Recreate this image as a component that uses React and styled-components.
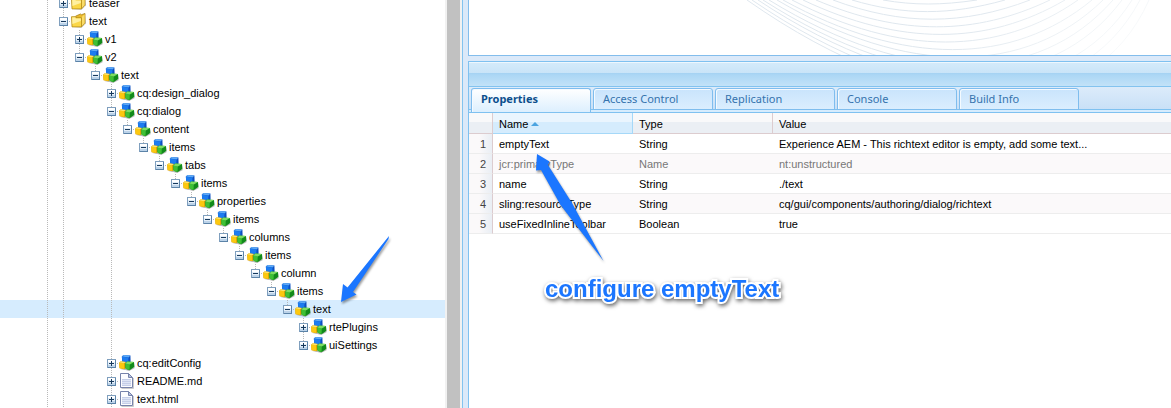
import React from 'react';
import styled, { createGlobalStyle, css } from 'styled-components';

const GlobalStyle = createGlobalStyle`
  *, *::before, *::after { box-sizing: border-box; }
  body {
    margin: 0;
    background: #fff;
    color: #000;
    font: 11px/18px "Liberation Sans", Arial, sans-serif;
  }
  button { font: inherit; color: inherit; margin: 0; padding: 0; border: 0; background: none; }
`;

const Page = styled.div`
  display: flex;
  min-height: 100vh;
`;

/* ---------- repository tree ---------- */

const Explorer = styled.nav`
  display: flex;
  flex: 0 0 463px;
  overflow: hidden;
  border-right: 1px solid #83c3ef;
`;

const Tree = styled.ul`
  flex: 1;
  min-width: 0;
  margin: -6px 0 0;
  padding: 0;
  list-style: none;
`;

const TreeRow = styled.li`
  display: flex;
  height: 18px;
  padding-left: 39px;
  white-space: nowrap;
  background: ${(p) => (p.$selected ? '#d6ecfe' : 'transparent')};
`;

const dots = (dir) =>
  `repeating-linear-gradient(${dir}, #b9b9b9 0 1px, transparent 1px 2px)`;

const Guide = styled.span`
  flex: none;
  width: 16px;
  background: ${(p) => (p.$line ? dots('to bottom') : 'none')} 8px 0 / 1px 100% no-repeat;
`;

const Elbow = styled.span`
  display: flex;
  flex: none;
  align-items: center;
  width: 16px;
  padding-left: 4px;
  background:
    ${dots('to bottom')} 8px 0 / 1px ${(p) => (p.$last ? '9px' : '100%')} no-repeat,
    ${dots('to right')} 8px 9px / 8px 1px no-repeat;
`;

const Toggle = styled.button`
  display: block;
  width: 9px;
  height: 9px;
  svg { display: block; }
`;

const NodeIcon = styled.svg`
  flex: none;
  width: 16px;
  height: 16px;
  margin: 1px 2px 0 0;
`;

const ScrollTrack = styled.div`
  flex: 0 0 17px;
  padding: 0 2px;
  background: #f1f1f1;
`;

const ScrollThumb = styled.div`
  height: 100%;
  background: #c1c1c1;
`;

function ToggleIcon({ open }) {
  return (
    <svg width="9" height="9" viewBox="0 0 9 9" shapeRendering="crispEdges" aria-hidden="true">
      <path d="M0 0h9v9H0z" fill="#7f9fbe" />
      <path d="M8 1h1v8H1V8h7z" fill="#5b83a8" />
      <path d="M1 1h7v7H1z" fill="#e3eef8" />
      <path d="M1 1h7v2H1z" fill="#fff" />
      <path d="M1 6h7v2H1z" fill="#bcd3e9" />
      <path d={open ? 'M2 4h5v1H2z' : 'M2 4h5v1H2zM4 2h1v5H4z'} fill="#17395c" />
    </svg>
  );
}

function Cubes() {
  return (
    <NodeIcon viewBox="0 0 16 16" aria-hidden="true">
      <path d="M1.500 14.200l5 .8 3.500.9 5.500-2.600V8l-1 5z" fill="#888" opacity=".6" />
      <path d="M2.800 1.600L4.600.1l6.800.3.2 6.200-2.200 2-6-.8z" fill="#0b4fc0" />
      <path d="M2.800 1.600L4.600.1l6.800.3-1.800 2z" fill="#5eaaf7" />
      <path d="M2.900 1.700l6.600.7-.3 6L3.400 7.600z" fill="#1c7cf0" />
      <path d="M.2 7.400l1.600-1.200 5 .7.400 5.800-1.800 1.500-4.900-1z" fill="#cf9300" />
      <path d="M.2 7.400l5 .9.200 5.700-4.800-.9z" fill="#fcc810" />
      <path d="M.2 7.400l1.600-1.200 5 .7-1.600 1.400z" fill="#ffe56b" />
      <path d="M6.200 8.400l1.800-2 7 .6.300 5-4.800 3.200-3.900-1.400z" fill="#128a1a" />
      <path d="M6.200 8.400l4.600 1-.3 5.600-3.900-1.300z" fill="#3fc035" />
      <path d="M6.200 8.400l2.200-1.800 6.600.4-4.200 2.400z" fill="#7fdd62" />
    </NodeIcon>
  );
}

function Folder() {
  return (
    <NodeIcon viewBox="0 0 16 16" aria-hidden="true">
      <path d="M2 14.800h8.500L15 10.500V3l-1 8-4 3z" fill="#888" opacity=".5" />
      <path d="M4.500 3.200L9.500 1l1 .7L14 .5v9.600l-3.500 3.700z" fill="#eab92c" stroke="#a98213" strokeWidth=".8" />
      <path d="M10.500 4.300L13.600 1.200v8.700l-3.100 3.400z" fill="#f9dc6a" />
      <path d="M.5 3.700h3.700l1 1h5.300v9.200H1z" fill="#fbd748" stroke="#b48c16" strokeWidth=".8" />
      <path d="M1.200 4.500h2.600l1 1h5V8L1.400 11z" fill="#fff0a0" />
    </NodeIcon>
  );
}

function FileIcon() {
  return (
    <NodeIcon viewBox="0 0 16 16" aria-hidden="true">
      <path d="M2.500 15.500h12V5" fill="none" stroke="#aaa" opacity=".6" />
      <path d="M1.500.5h8l4 4v10h-12z" fill="#fdfdff" stroke="#7783ab" />
      <path d="M3 6h9v7H3z" fill="#dfe5f5" />
      <path d="M9.500.5v4h4z" fill="#b7c2e0" stroke="#7783ab" />
      <path d="M3 6.500h9M3 8.500h9M3 10.500h9M3 12.500h9" stroke="#c5cee8" />
    </NodeIcon>
  );
}

const icons = { folder: Folder, node: Cubes, file: FileIcon };

const chain = [
  'content', 'items', 'tabs', 'items', 'properties', 'items',
  'columns', 'items', 'column', 'items',
];

const dialogField = {
  label: 'text',
  selected: true,
  children: [{ label: 'rtePlugins' }, { label: 'uiSettings' }],
};

const dialogTree = chain.reduceRight(
  (child, label) => ({ label, children: [child] }),
  dialogField
);

const repository = [
  { label: 'teaser', kind: 'folder' },
  {
    label: 'text',
    kind: 'folder',
    continues: true,
    children: [
      { label: 'v1' },
      {
        label: 'v2',
        children: [
          {
            label: 'text',
            children: [
              { label: 'cq:design_dialog' },
              { label: 'cq:dialog', children: [dialogTree] },
              { label: 'cq:editConfig' },
              { label: 'README.md', kind: 'file' },
              { label: 'text.html', kind: 'file', continues: true },
            ],
          },
        ],
      },
    ],
  },
];

function flatten(nodes, guides) {
  return nodes.flatMap((node, i) => {
    const last = i === nodes.length - 1 && !node.continues;
    return [
      { ...node, guides, last },
      ...flatten(node.children || [], [...guides, !last]),
    ];
  });
}

function RepositoryTree() {
  return (
    <Tree role="tree" aria-label="Repository">
      {flatten(repository, [true]).map((node, i) => {
        const Icon = icons[node.kind || 'node'];
        const open = Boolean(node.children);
        return (
          <TreeRow
            key={i}
            role="treeitem"
            aria-level={node.guides.length}
            aria-expanded={open}
            aria-selected={Boolean(node.selected)}
            $selected={node.selected}
          >
            {node.guides.map((line, g) => <Guide key={g} $line={line} />)}
            <Elbow $last={node.last}>
              <Toggle aria-label={`${open ? 'Collapse' : 'Expand'} ${node.label}`}>
                <ToggleIcon open={open} />
              </Toggle>
            </Elbow>
            <Icon />
            <span>{node.label}</span>
          </TreeRow>
        );
      })}
    </Tree>
  );
}

/* ---------- right-hand side ---------- */

const Workspace = styled.main`
  display: flex;
  flex: 1;
  flex-direction: column;
  gap: 5px;
  min-width: 0;
  padding-left: 5px;
  background: #dbe9f9;
`;

const Welcome = styled.section`
  display: flex;
  justify-content: flex-end;
  height: 56px;
  overflow: hidden;
  background: #fff;
  border: solid #83bdec;
  border-width: 0 0 1px 1px;
`;

const Details = styled.section`
  position: relative;
  display: flex;
  flex: 1;
  flex-direction: column;
  background: #fff;
  border: solid #7fc1f0;
  border-width: 1px 0 0 1px;
`;

const PanelHeader = styled.div`
  height: 25px;
  border-top: 1px solid #eef7fe;
  border-bottom: 1px solid #83c3ef;
  background: linear-gradient(#d3eafa 0 1px, #c9e4f8 10px, #a4d2f2 10px, #acd7f5 12px, #c2e2f8 100%);
`;

const TabStrip = styled.div`
  display: flex;
  gap: 2px;
  height: 26px;
  padding: 1px 2px 0;
  border-bottom: 1px solid #7fc1f0;
  background: linear-gradient(#dcebfa, #c9e0f7 22px, #7fc1f0 22px 23px, #d6ecfd 23px);
`;

const Tab = styled.button`
  width: 120px;
  height: 22px;
  padding: 0 9px;
  border: 1px solid #7fbdee;
  border-radius: 3px 3px 0 0;
  box-shadow: inset 1px 1px #f4faff;
  background: linear-gradient(#c9e4fc, #dbeefe);
  color: #3573ad;
  font: 11px/20px "Noto Sans", Tahoma, sans-serif;
  text-align: left;
  ${(p) => p.$active && css`
    height: 24px;
    padding-bottom: 3px;
    border-bottom: 0;
    background: linear-gradient(#fff, #dceffe);
    color: #0c4f8d;
    font-weight: 700;
  `}
`;

const Grid = styled.table`
  width: 100%;
  table-layout: fixed;
  border-collapse: separate;
  border-spacing: 0;
  text-align: left;
`;

const Column = styled.col`
  width: ${(p) => p.$width || 'auto'};
`;

const HeadCell = styled.th`
  height: 21px;
  padding: 2px 6px 0;
  border: solid #dccccf;
  border-width: 0 1px 1px 0;
  background: linear-gradient(#f9f9fa 0 9px, #ebeff4 9px);
  font-weight: 400;
  line-height: 18px;
  &:last-child { border-right: 0; }
  ${(p) => p.$sorted && css`
    border-color: #a5d8f8;
    background: linear-gradient(#eaf5fe 0 9px, #d5ecfd 9px);
  `}
`;

const SortButton = styled.button`
  display: flex;
  align-items: center;
  gap: 3px;
`;

const Row = styled.tr`
  background: ${(p) => (p.$striped ? '#fbf9fa' : '#fff')};
  color: ${(p) => (p.$readOnly ? '#777' : '#000')};
`;

const Cell = styled.td`
  height: 20px;
  padding: 1px 6px 0;
  border-bottom: 1px solid #ededed;
  line-height: 18px;
  white-space: nowrap;
`;

const NumberCell = styled(Cell)`
  border-right: 1px solid #dccccf;
  background: linear-gradient(to right, #fbf9fa 10px, #e9eef4);
  color: #444;
  text-align: right;
`;

/* ---------- annotations over the page ---------- */

const blue = '#1b76ff';

const Arrow = styled.svg`
  position: absolute;
  top: ${(p) => p.$top}px;
  left: ${(p) => p.$left}px;
  overflow: visible;
  pointer-events: none;
  fill: ${blue};
  filter: drop-shadow(1px 2px 1px rgba(0, 0, 0, 0.4));
`;

const Note = styled.p`
  position: absolute;
  top: 213px;
  left: 76px;
  margin: 0;
  color: ${blue};
  font-size: 24px;
  font-weight: 700;
  line-height: 28px;
  white-space: nowrap;
  paint-order: stroke fill;
  -webkit-text-stroke: 4px #fff;
  filter: drop-shadow(1px 2px 2px rgba(0, 0, 0, 0.6));
`;

const TreeArea = styled.div`
  position: relative;
  flex: 1;
  min-width: 0;
`;

const curves = [
  [883, 977], [852, 1005], [833, 1030], [816, 1050], [803, 1065], [792, 1078], [783, 1092],
  [777, 1103], [769, 1113], [763, 1122], [758, 1132], [752, 1140], [747, 1149],
];

function WelcomeArt() {
  return (
    <svg width="431" height="55" viewBox="740 0 431 55" fill="none" stroke="url(#fade)" aria-hidden="true">
      <defs>
        <linearGradient id="fade" gradientUnits="userSpaceOnUse" x1="990" y1="0" x2="1070" y2="90">
          <stop offset="0" stopColor="#dfe7ee" />
          <stop offset="1" stopColor="#f8fafb" />
        </linearGradient>
      </defs>
      {curves.map(([l, r], k) => {
        const w = r - l;
        const depth = (4 + k * 7.6) / 0.75;
        return (
          <path
            key={l}
            d={`M${l} 0C${l + w * (0.33 + k * 0.01)} ${depth} ${l + w * (0.62 + k * 0.02)} ${depth} ${r} 0`}
          />
        );
      })}
    </svg>
  );
}

const tabs = ['Properties', 'Access Control', 'Replication', 'Console', 'Build Info'];

const properties = [
  ['emptyText', 'String', 'Experience AEM - This richtext editor is empty, add some text...'],
  ['jcr:primaryType', 'Name', 'nt:unstructured'],
  ['name', 'String', './text'],
  ['sling:resourceType', 'String', 'cq/gui/components/authoring/dialog/richtext'],
  ['useFixedInlineToolbar', 'Boolean', 'true'],
];

export default function App() {
  return (
    <>
      <GlobalStyle />
      <Page>
        <Explorer>
          <TreeArea>
            <RepositoryTree />
            <Arrow $left={341} $top={236} width="48" height="66">
              <path d="M48 0L6.500 51.500 2 48 0 66 15.500 58.500 12 56 47.500 3z" />
            </Arrow>
          </TreeArea>
          <ScrollTrack><ScrollThumb /></ScrollTrack>
        </Explorer>
        <Workspace>
          <Welcome><WelcomeArt /></Welcome>
          <Details>
            <PanelHeader />
            <TabStrip role="tablist">
              {tabs.map((label, i) => (
                <Tab key={label} role="tab" aria-selected={i === 0} $active={i === 0}>{label}</Tab>
              ))}
            </TabStrip>
            <Grid>
              <colgroup>
                <Column $width="24px" />
                <Column $width="140px" />
                <Column $width="140px" />
                <Column />
              </colgroup>
              <thead>
                <tr>
                  <HeadCell aria-label="Row" />
                  <HeadCell $sorted aria-sort="ascending">
                    <SortButton>
                      Name
                      <svg width="8" height="4" viewBox="0 0 8 4" aria-hidden="true">
                        <path d="M4 0l4 4H0z" fill="#4ba3e0" />
                      </svg>
                    </SortButton>
                  </HeadCell>
                  <HeadCell>Type</HeadCell>
                  <HeadCell>Value</HeadCell>
                </tr>
              </thead>
              <tbody>
                {properties.map(([name, type, value], i) => (
                  <Row key={name} $striped={i % 2 === 1} $readOnly={i === 1}>
                    <NumberCell>{i + 1}</NumberCell>
                    <Cell>{name}</Cell>
                    <Cell>{type}</Cell>
                    <Cell>{value}</Cell>
                  </Row>
                ))}
              </tbody>
            </Grid>
            <Arrow $left={67} $top={92} width="68" height="107">
              <path d="M67.500 107L24.500 51 5 16 0 16.500 1 0 13.500 7.500 12 11 36 49z" />
            </Arrow>
            <Note>configure emptyText</Note>
          </Details>
        </Workspace>
      </Page>
    </>
  );
}
